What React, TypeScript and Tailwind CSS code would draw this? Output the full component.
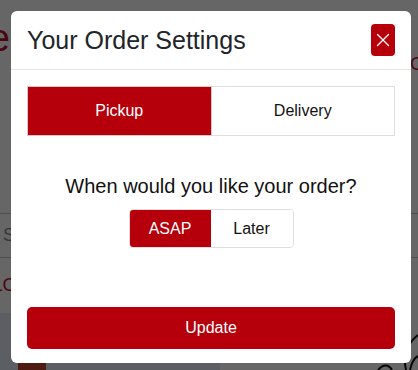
import { X } from 'lucide-react';

function PageBehind() {
  return (
    <div className="flex flex-col h-full">
      <div className="flex justify-between h-[213px]">
        <div className="w-[10px] flex justify-end overflow-hidden">
          <span className="mt-[18px] text-[38px] leading-[40px] text-[#b8102c] whitespace-nowrap">Welcome</span>
        </div>
        <div className="w-[8px] overflow-hidden">
          <span className="block mt-[54px] text-[19px] leading-[20px] text-[#b8102c] whitespace-nowrap">Order</span>
        </div>
      </div>
      <div className="h-[45px] flex items-center border-y border-[#c8c8c8] pl-[3px] text-[18px] text-[#8a8a8a]">
        Search
      </div>
      <div className="h-[55px] flex items-center -ml-[8px] text-[19px] text-[#b8102c]">LOCATIONS</div>
      <div className="flex-1 flex">
        <div className="w-[220px] bg-[#e4eefa] flex items-end pl-[18px]">
          <div className="w-[28px] h-[8px] bg-[#c2412e]" />
        </div>
        <div className="flex-1 flex justify-end">
          <svg width="60" height="57" viewBox="0 0 60 57" fill="none" stroke="#111" strokeWidth="2">
            <path d="M48 57 C 44 40, 52 28, 60 22" />
            <path d="M52 57 C 54 48, 58 44, 60 43" />
            <path d="M20 57 C 24 52, 30 50, 34 57" />
          </svg>
        </div>
      </div>
    </div>
  );
}

export default function App() {
  return (
    <div className="relative w-[418px] h-[370px] overflow-hidden bg-white font-['Liberation_Sans',Arial,sans-serif]">
      <PageBehind />
      <div className="absolute inset-0 bg-black/60" />
      <div className="absolute inset-0 pl-[11px] pt-[11px]">
        <div className="w-[400px] h-[352px] bg-white rounded-[6px] flex flex-col">
          <div className="h-[59px] flex items-center justify-between pl-4 pr-4 border-b border-[#e5e5e5]">
            <h2 className="text-[25px] leading-[30px] text-[#212529] -mt-[1px]">Your Order Settings</h2>
            <button className="w-[24px] h-[32px] bg-[#b5000c] rounded-[4px] flex items-center justify-center text-white">
              <X className="w-[22px] h-[22px]" strokeWidth={1.4} />
            </button>
          </div>
          <div className="flex flex-col px-4 pt-4">
            <div className="flex h-[50px]">
              <button className="flex-1 bg-[#b5000c] border border-[#dcc5c7] text-white text-[16px]">Pickup</button>
              <button className="flex-1 bg-white border border-l-0 border-[#dedede] text-[#111] text-[16px]">Delivery</button>
            </div>
            <p className="mt-[35px] text-center text-[20px] leading-[30px] text-[#111]">When would you like your order?</p>
            <div className="mt-[8px] flex justify-center">
              <div className="flex h-[39px] rounded-[4px] border border-[#dedede] overflow-hidden">
                <button className="w-[81px] bg-[#b5000c] text-white text-[16px]">ASAP</button>
                <button className="w-[82px] bg-white text-[#111] text-[16px]">Later</button>
              </div>
            </div>
            <button className="mt-[59px] h-[42px] w-full rounded-[5px] bg-[#b5000c] text-white text-[16px]">Update</button>
          </div>
        </div>
      </div>
    </div>
  );
}
